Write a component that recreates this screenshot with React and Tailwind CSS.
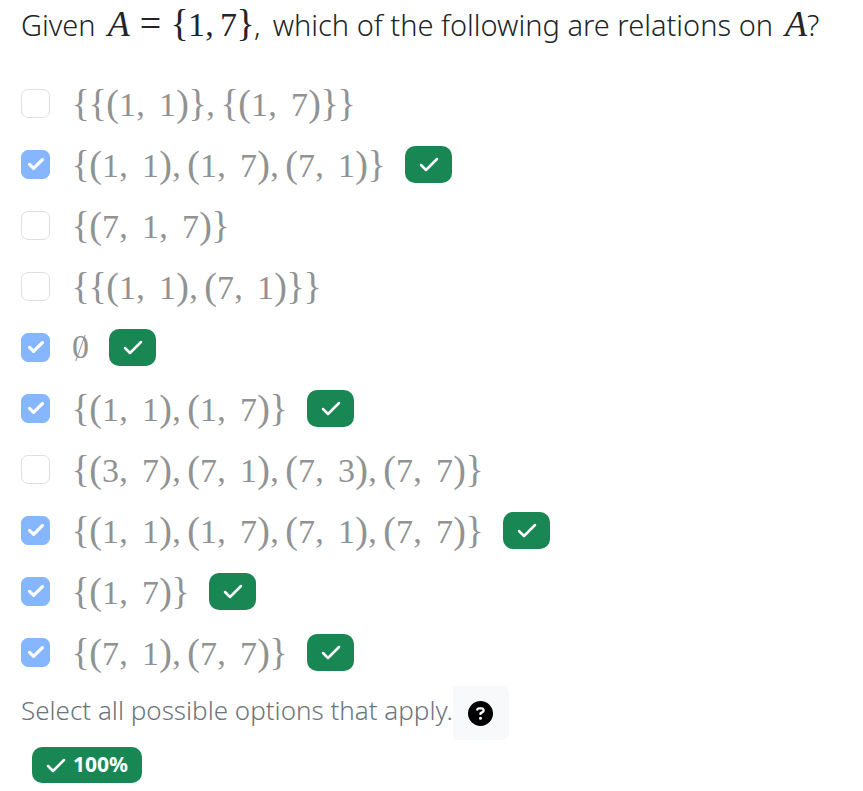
import { FaCircleQuestion } from 'react-icons/fa6';

const OPTIONS = [
  { set: '{{(1; 1)},{(1; 7)}}', checked: false },
  { set: '{(1; 1),(1; 7),(7; 1)}', checked: true },
  { set: '{(7; 1; 7)}', checked: false },
  { set: '{{(1; 1),(7; 1)}}', checked: false },
  { set: '∅', checked: true },
  { set: '{(1; 1),(1; 7)}', checked: true },
  { set: '{(3; 7),(7; 1),(7; 3),(7; 7)}', checked: false },
  { set: '{(1; 1),(1; 7),(7; 1),(7; 7)}', checked: true },
  { set: '{(1; 7)}', checked: true },
  { set: '{(7; 1),(7; 7)}', checked: true },
];

// A comma inside a tuple is written as ";" in the data: it takes a wider gap.
const TOKENS = {
  '{': 'w-[17px] text-[38px]',
  '}': 'w-[17px] text-[38px]',
  '(': 'w-[13px] text-[38px]',
  ')': 'w-[13px] text-[38px]',
  ',': 'w-[9px] mr-[6px]',
  ';': 'w-[9px] mr-[14px]',
};

// The empty set in its narrow form: a zero with a thin stroke across it.
function EmptySet() {
  return (
    <span role="img" aria-label="∅" className="relative inline-flex w-[17px] justify-center">
      0
      <span className="absolute top-[4px] left-[8px] h-[28px] w-px rotate-[20deg] bg-current" />
    </span>
  );
}

function MathText({ value }) {
  return (
    <span className="inline-flex items-baseline font-['Liberation_Serif',serif] text-[34px] leading-none">
      {[...value.replaceAll(' ', '')].map((c, i) =>
        c === '∅' ? (
          <EmptySet key={i} />
        ) : (
          <span key={i} className={`inline-flex justify-center leading-none ${TOKENS[c] || 'w-[17px]'}`}>
            {c === ';' ? ',' : c}
          </span>
        ),
      )}
    </span>
  );
}

function Check({ className }) {
  return (
    <svg viewBox="0 0 20 15" className={className} fill="none" stroke="currentColor" strokeLinecap="round" strokeLinejoin="round" aria-hidden="true">
      <path d="M2 8l5 5L18 2" />
    </svg>
  );
}

function Option({ set, checked, id }) {
  return (
    <li className="flex h-[61px] items-center">
      <span className="relative flex size-[29px] shrink-0">
        <input
          id={id}
          type="checkbox"
          defaultChecked={checked}
          disabled
          className="size-full appearance-none rounded-[7px] border border-[#dfdfdf] bg-white checked:border-[#86b7fe] checked:bg-[#86b6ff]"
        />
        {checked && <Check className="pointer-events-none absolute top-[8px] left-[7px] w-[16px] stroke-[4] text-white" />}
      </span>
      <label htmlFor={id} className="mb-[2px] ml-[22px] text-[#909294]">
        <MathText value={set} />
      </label>
      {checked && (
        <span className="ml-5 flex h-[37px] w-[47px] items-center justify-center rounded-[10px] bg-[#198754] text-white">
          <Check className="w-5 stroke-[2.5]" />
        </span>
      )}
    </li>
  );
}

export default function App() {
  return (
    <main className="bg-white px-[21px] font-['Noto_Sans',sans-serif] text-[#212529]">
      <h1 className="flex h-[50px] items-baseline gap-x-3 text-[29px] leading-[50px] font-light whitespace-nowrap">
        <span>Given</span>
        <span className="flex items-baseline">
          <i className="font-['Liberation_Serif',serif] text-[36px] leading-none">A</i>
          <span className="mx-[10px] font-['Liberation_Serif',serif] text-[38px] leading-none">=</span>
          <MathText value="{1,7}" />
          <span>,</span>
        </span>
        <span>which of the following are relations on</span>
        <span>
          <i className="font-['Liberation_Serif',serif] text-[36px] leading-none">A</i>?
        </span>
      </h1>
      <ul className="mt-[23px]">
        {OPTIONS.map((o, i) => (
          <Option key={i} id={`option-${i}`} {...o} />
        ))}
      </ul>
      <div className="mt-[3px] flex h-[54px]">
        <p className="text-[26px] leading-[48px] font-light text-[#6c757d]">Select all possible options that apply.</p>
        <button type="button" aria-label="Help" className="flex w-[56px] items-center justify-center rounded-r-[7px] bg-[#f8f9fa] text-black">
          <FaCircleQuestion className="size-[25px]" />
        </button>
      </div>
      <div className="mt-[7px] ml-[11px] flex h-[36px] w-fit items-center gap-[7px] rounded-[10px] bg-[#198754] px-[14px] text-[21px] font-bold text-white">
        <Check className="w-5 stroke-[2.5]" />
        <span>100%</span>
      </div>
    </main>
  );
}
